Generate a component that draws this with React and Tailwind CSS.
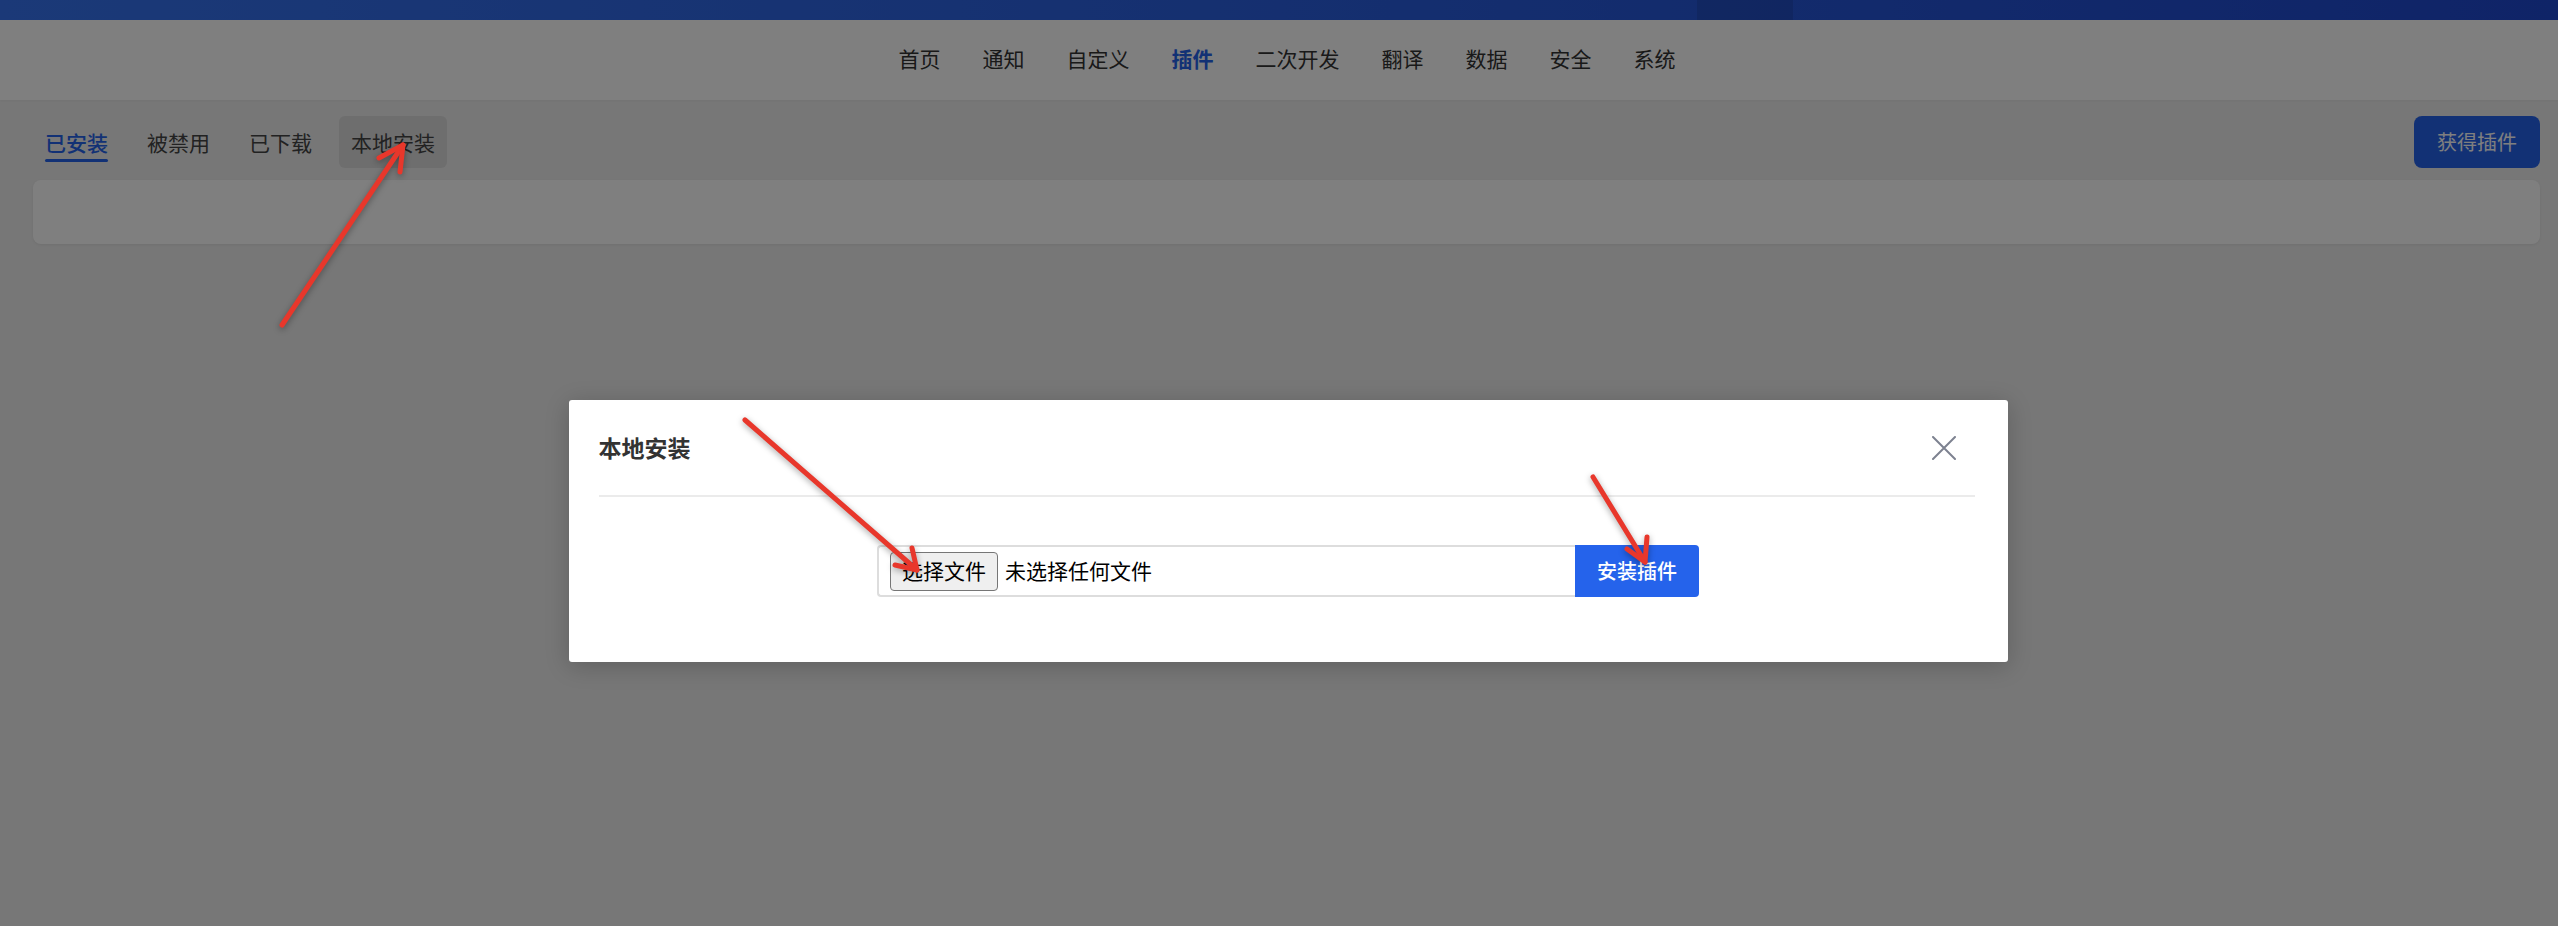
import { useState } from 'react'

const NAV_ITEMS = ['首页', '通知', '自定义', '插件', '二次开发', '翻译', '数据', '安全', '系统']
const TABS = ['已安装', '被禁用', '已下载', '本地安装']

// annotation arrows: tail, tip, and the two barb ends
const ARROWS = [
  { from: [282, 325], to: [403, 145], barbs: [[379, 158], [400, 172]] },
  { from: [745, 420], to: [917, 570], barbs: [[895, 565], [912, 548]] },
  { from: [1593, 477], to: [1645, 562], barbs: [[1627, 549], [1647, 537]] },
]

const TopNav = () => (
  <nav className="flex h-[80px] items-center justify-center gap-[42px] bg-white pb-[3px] pl-[16px] shadow-[0_1px_2px_rgba(0,0,0,0.04)]">
    {NAV_ITEMS.map((item) => (
      <a
        key={item}
        className={
          item === '插件'
            ? 'text-[21px] font-semibold leading-none text-[#2563eb]'
            : 'text-[21px] leading-none text-[#333333]'
        }
      >
        {item}
      </a>
    ))}
  </nav>
)

const PluginTabs = ({ active, hovered }) => (
  <div className="flex gap-[15px]">
    {TABS.map((tab) => (
      <button
        key={tab}
        type="button"
        className={`relative flex h-[52px] items-center rounded-md px-3 text-[21px] leading-none ${
          tab === hovered ? 'bg-[#dcdcdc] text-[#222222]' : ''
        } ${tab === active ? 'font-medium text-[#2563eb]' : 'text-[#444444]'}`}
      >
        {tab}
        {tab === active ? <span className="absolute bottom-[6px] left-3 right-3 h-[3px] rounded-full bg-[#2563eb]" /> : null}
      </button>
    ))}
  </div>
)

const LocalInstallModal = () => (
  <div className="absolute inset-0 flex justify-center pl-[18px] pt-[400px]">
    <div className="h-[262px] w-[1439px] rounded-[3px] bg-white shadow-[0_4px_24px_rgba(0,0,0,0.2)]">
      <div className="ml-[30px] mr-[33px] flex h-[97px] items-center justify-between border-b-2 border-[#ebebeb]">
        <h2 className="text-[23px] font-semibold text-[#333333]">本地安装</h2>
        <button type="button" className="mr-[11px] flex h-[40px] w-[40px] items-center justify-center text-[#7d8290]">
          <svg width="24" height="24" viewBox="0 0 24 24" fill="none" stroke="currentColor" strokeWidth="2" strokeLinecap="round">
            <path d="M1 1L23 23M23 1L1 23" />
          </svg>
        </button>
      </div>
      <div className="flex justify-center pt-[48px]">
        <div className="flex h-[52px]">
          <div className="flex w-[698px] items-center gap-[7px] rounded-l-[4px] border-2 border-r-0 border-[#dddddd] pl-[11px]">
            <span className="flex h-[39px] w-[108px] items-center justify-center rounded-[4px] border border-[#767676] bg-[#efefef] text-[21px] text-black">
              选择文件
            </span>
            <span className="text-[21px] text-black">未选择任何文件</span>
          </div>
          <button type="button" className="flex w-[124px] items-center justify-center rounded-r-[4px] bg-[#2563eb] text-[20px] font-medium text-white">
            安装插件
          </button>
        </div>
      </div>
    </div>
  </div>
)

const Annotations = () => (
  <svg
    className="pointer-events-none absolute left-0 top-0 drop-shadow-[0_2px_3px_rgba(0,0,0,0.35)]"
    width="2558"
    height="926"
    viewBox="0 0 2558 926"
    fill="none"
    stroke="#e8372b"
    strokeWidth="5"
    strokeLinecap="round"
    strokeLinejoin="round"
  >
    {ARROWS.map((a, i) => (
      <g key={i}>
        <line x1={a.from[0]} y1={a.from[1]} x2={a.to[0]} y2={a.to[1]} />
        <polyline points={`${a.barbs[0][0]},${a.barbs[0][1]} ${a.to[0]},${a.to[1]} ${a.barbs[1][0]},${a.barbs[1][1]}`} />
      </g>
    ))}
  </svg>
)

export default function App() {
  const [activeTab] = useState('已安装')

  return (
    <div className="relative h-[926px] overflow-hidden bg-[#eeeeee] font-['Noto_Sans_CJK_SC','Noto_Sans',sans-serif]">
      <div className="relative h-[20px] bg-[linear-gradient(90deg,#3673f0,#2a5fe0_50%,#1f48cf)]">
        <span className="absolute left-[1697px] top-0 h-[20px] w-[96px] bg-black/10" />
      </div>
      <TopNav />

      <main className="pl-[33px] pr-[18px] pt-[16px]">
        <div className="flex items-center justify-between">
          <PluginTabs active={activeTab} hovered="本地安装" />
          <button type="button" className="h-[52px] w-[126px] rounded-lg bg-[#2563eb] text-[20px] text-white">
            获得插件
          </button>
        </div>
        <div className="mt-[12px] h-[64px] rounded-lg bg-white shadow-[0_1px_3px_rgba(0,0,0,0.06)]" />
      </main>

      <div className="absolute inset-0 bg-black/50" />
      <LocalInstallModal />
      <Annotations />
    </div>
  )
}
